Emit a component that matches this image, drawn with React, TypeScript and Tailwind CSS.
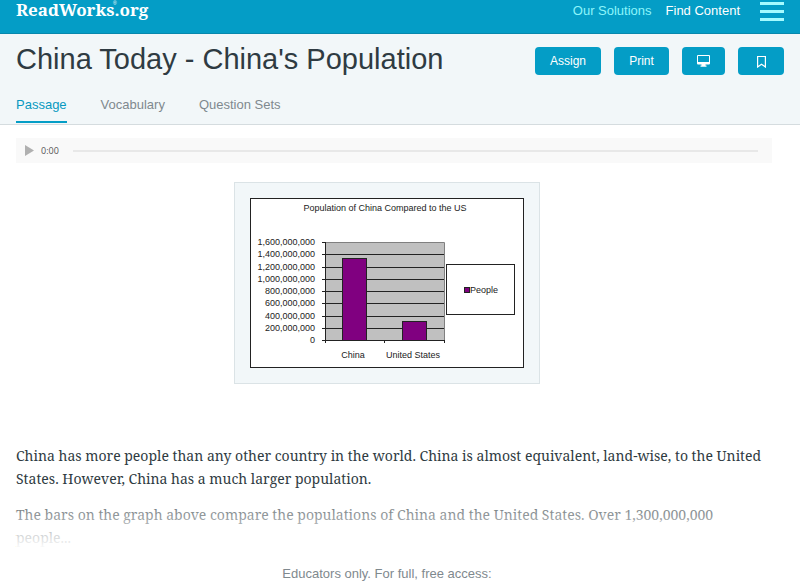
const scale = [
  "1,600,000,000",
  "1,400,000,000",
  "1,200,000,000",
  "1,000,000,000",
  "800,000,000",
  "600,000,000",
  "400,000,000",
  "200,000,000",
  "0",
];

// y position of each grid line, top to bottom
const lines = [44, 56, 69, 81, 93, 105, 118, 130, 142];

function PopulationChart() {
  return (
    <svg
      viewBox="0 0 274 170"
      className="block w-[274px] font-['Liberation_Sans',sans-serif]"
      role="img"
      aria-label="Population of China Compared to the US"
      fill="#222"
      fontSize="9"
    >
      <rect x="0.5" y="0.5" width="273" height="169" fill="#fff" stroke="#222" />
      <text x="135" y="13" textAnchor="middle" fontSize="9">
        Population of China Compared to the US
      </text>

      {/* Plot area */}
      <rect x="75" y="44" width="119" height="98" fill="#c0c0c0" />
      <path d="M75 44.5H194.500V142" fill="none" stroke="#808080" />
      {scale.map((label, i) => (
        <g key={label}>
          <text x="65" y={lines[i] + 3} textAnchor="end">
            {label}
          </text>
          <path
            d={`M72 ${lines[i] + 0.5}H${i === 0 ? 75 : 194}`}
            stroke="#222"
          />
        </g>
      ))}
      <path d="M75.500 44V145M134.500 142V145M194.500 142V145" stroke="#222" />
      <rect x="92.500" y="60.500" width="24" height="82" fill="#800080" stroke="#222" />
      <rect x="152.500" y="123.500" width="24" height="19" fill="#800080" stroke="#222" />
      <text x="103" y="160" textAnchor="middle">China</text>
      <text x="163" y="160" textAnchor="middle">United States</text>

      {/* Legend */}
      <rect x="196.500" y="66.500" width="68" height="50" fill="#fff" stroke="#222" />
      <rect x="214.500" y="89.500" width="5" height="5" fill="#800080" stroke="#222" />
      <text x="220" y="95">People</text>
    </svg>
  );
}

export default function App() {
  return (
    <div className="h-screen overflow-hidden bg-white font-['Liberation_Sans',Arial,sans-serif] text-[#2f3b42]">
      <header className="flex h-[34px] items-start justify-between border-b border-[#0788ad] bg-[#049dc6] px-4">
        <a
          href="#home"
          className="relative font-['Noto_Serif','DejaVu_Serif_Condensed','Liberation_Serif',serif] text-[17px] leading-5 font-bold text-white"
        >
          ReadWorks.org
          <span className="absolute top-0 left-[97px] font-['Liberation_Sans',sans-serif] text-[5px] leading-[6px] font-normal">
            ®
          </span>
        </a>
        <nav className="flex items-start text-[13px] leading-[22px]">
          <a href="#solutions" className="mr-[14px] text-[#8df5fb]">
            Our Solutions
          </a>
          <a href="#find" className="mr-5 text-white">
            Find Content
          </a>
          <button type="button" aria-label="Menu" className="flex w-6 flex-col gap-[5px] pt-0.5">
            <span className="h-[3px] w-full bg-[#a5fbff]" />
            <span className="h-[3px] w-full bg-[#a5fbff]" />
            <span className="h-[3px] w-full bg-[#a5fbff]" />
          </button>
        </nav>
      </header>

      <section className="border-b border-[#d5dcdf] bg-[#f2f7f9] px-4 pb-px">
        <div className="flex items-start justify-between">
          <h1 className="pt-[9px] text-[29px] leading-8">China Today - China's Population</h1>
          <div className="flex gap-[13px] pt-[13px] text-xs text-white">
            <button type="button" className="h-7 w-[66px] rounded bg-[#049dc6]">
              Assign
            </button>
            <button type="button" className="h-7 w-[55px] rounded bg-[#049dc6]">
              Print
            </button>
            <button
              type="button"
              aria-label="Present"
              className="flex h-7 w-[43px] items-center justify-center rounded bg-[#049dc6]"
            >
              <svg width="13" height="12" viewBox="0 0 13 12" fill="currentColor">
                <path
                  fillRule="evenodd"
                  d="M1 0h11a1 1 0 0 1 1 1v7.500a1 1 0 0 1-1 1H8.500v1h1v1.200h-6v-1.200h1v-1H1a1 1 0 0 1-1-1V1a1 1 0 0 1 1-1zm0 1v6h11V1z"
                />
              </svg>
            </button>
            <button
              type="button"
              aria-label="Bookmark"
              className="flex h-7 w-[46px] items-center justify-center rounded bg-[#049dc6]"
            >
              <svg width="9" height="13" viewBox="0 0 9 13" fill="none" stroke="currentColor">
                <path d="M.6 1.500h7.800v10.500L4.500 9.200.6 12z" strokeWidth="1.200" />
              </svg>
            </button>
          </div>
        </div>
        <nav className="flex gap-[34px] pt-5 text-[13px] leading-5 text-[#7f898e]">
          <a href="#passage" className="border-b-2 border-[#049dc6] pb-1.5 text-[#0899c0]">
            Passage
          </a>
          <a href="#vocabulary">Vocabulary</a>
          <a href="#questions">Question Sets</a>
        </nav>
      </section>

      <main className="pl-4">
        <div className="mt-[13px] mr-7 flex h-[25px] items-center bg-[#f9f9f9] pr-[14px] pl-[9px]">
          <button type="button" aria-label="Play" className="mr-[7px] text-[#b0b0b0]">
            <svg width="9" height="11" viewBox="0 0 9 11" fill="currentColor">
              <path d="M0 0L9 5.500L0 11z" />
            </svg>
          </button>
          <span className="mr-[14px] font-['Open_Sans',sans-serif] text-[9px] text-[#555]">0:00</span>
          <div className="h-0.5 flex-1 bg-[#e8e8e8]" />
        </div>

        <div className="mr-[42px]">
          <figure className="mx-auto mt-[19px] w-fit border border-[#dbe3e6] bg-[#f2f7f9] p-[15px]">
            <PopulationChart />
          </figure>

          <article className="relative -mr-2 mt-[60px] font-['Noto_Serif','DejaVu_Serif_Condensed','Liberation_Serif',serif] text-sm leading-[23px]">
            <p>
              China has more people than any other country in the world. China is almost equivalent,
              land-wise, to the United States. However, China has a much larger population.
            </p>
            <p className="mt-[13px]">
              The bars on the graph above compare the populations of China and the United States. Over
              1,300,000,000 people...
            </p>
            {/* Fade out the end of the preview */}
            <div className="pointer-events-none absolute inset-x-0 bottom-0 h-16 bg-linear-to-b from-white/0 to-white" />
          </article>

          <div className="mt-[15px] text-center text-[13px] leading-5 text-[#7f898e]">
            <p>Educators only. For full, free access:</p>
            <div className="mt-1 flex justify-center gap-4">
              <button
                type="button"
                aria-label="Log in"
                className="h-9 w-[75px] rounded bg-[#049dc6]"
              />
              <button
                type="button"
                aria-label="Sign up"
                className="h-9 w-[87px] rounded bg-[#049dc6]"
              />
            </div>
          </div>
        </div>
      </main>
    </div>
  );
}
